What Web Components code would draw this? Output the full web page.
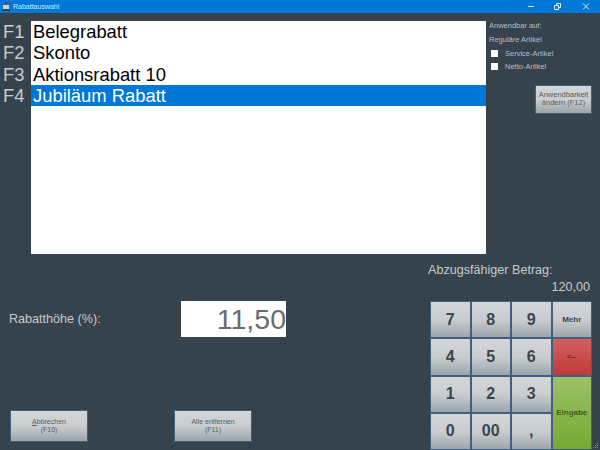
<!DOCTYPE html>
<html>
<head>
<meta charset="utf-8">
<title>Rabattauswahl</title>
<style>
html, body { margin: 0; height: 100%; overflow: hidden; background: #36434c; }
body { font-family: "Liberation Sans", Arial, sans-serif; }
</style>
</head>
<body>
<rabatt-window>
    <title-bar slot="title">Rabattauswahl</title-bar>
    <rabatt-list slot="list"></rabatt-list>
    <apply-panel slot="panel"></apply-panel>
    <amount-row slot="amount" label="Rabatthöhe (%):" value="11,50"></amount-row>
    <div slot="actions" style="display:contents">
        <pos-button style="width:78px;height:32px">
            <span><u>A</u>bbrechen<br>(F10)</span>
        </pos-button>
        <pos-button style="width:78px;height:32px;margin-left:86px">
            <span>Alle entfernen<br>(F11)</span>
        </pos-button>
    </div>
    <key-pad slot="keypad"></key-pad>
</rabatt-window>

<script>
class PosButton extends HTMLElement {
    constructor() {
        super()
        this.attachShadow({ mode: 'open' }).innerHTML = `<style>
            :host {
                display: flex;
                box-sizing: border-box;
                align-items: center;
                justify-content: center;
                text-align: center;
                border: 1px solid #3f6080;
                background: linear-gradient(#d3d7d9 0%, #c9cdd0 50%, #9ca5a9 100%);
                color: #565d63;
                font-size: 7px;
                line-height: 8px;
            }
            :host([key]) { font-size: 16px; font-weight: bold; color: #3c454c; }
            :host([label]) { font-size: 8px; font-weight: bold; color: #3c454c; }
            :host([danger]) { background: linear-gradient(#d45f5f, #c13a3c); color: #7e2a2a; }
            :host([ok]) { background: linear-gradient(#9cc268, #76a932); color: #3f5a20; }
        </style><slot></slot>`
    }
}

class TitleBar extends HTMLElement {
    constructor() {
        super()
        this.attachShadow({ mode: 'open' }).innerHTML = `<style>
            :host {
                display: flex;
                align-items: center;
                height: 13px;
                background: #0078d7;
                color: #d7e9f8;
                font-size: 7px;
            }
            .icon { margin: 0 3px 0 2px; }
            .name { flex: 1; }
            .controls { display: flex; margin-right: 1px; }
            .controls svg { width: 27px; height: 13px; display: block; }
        </style>
        <svg class="icon" width="8" height="9" viewBox="0 0 8 9">
            <rect x="1" y="3" width="6" height="4" fill="#c9d2da"/>
            <rect x="3" y="0" width="2" height="3" fill="#a83232"/>
            <rect x="0" y="7" width="8" height="2" fill="#39424b"/>
        </svg>
        <span class="name"><slot></slot></span>
        <span class="controls">
            <svg viewBox="0 0 27 13"><path d="M10 6.500h6" stroke="#e4eff9" fill="none"/></svg>
            <svg viewBox="0 0 27 13"><path d="M9.500 5.500h4v4h-4zM11.500 5.500v-2h4v4h-2" stroke="#e4eff9" fill="none"/></svg>
            <svg viewBox="0 0 27 13"><path d="M11 3.500l6 6M17 3.500l-6 6" stroke="#e4eff9" fill="none"/></svg>
        </span>`
    }
}

class RabattList extends HTMLElement {
    items = ["Belegrabatt", "Skonto", "Aktionsrabatt 10", "Jubiläum Rabatt"]
    selected = 3

    constructor() {
        super()
        this.shadow = this.attachShadow({ mode: 'open' })
    }

    connectedCallback() {
        const keys = this.items.map((_, i) => `<div class="key">F${i + 1}</div>`)
        const rows = this.items.map((item, i) =>
            `<div class="row${i === this.selected ? " selected" : ""}">${item}</div>`)
        this.shadow.innerHTML = `<style>
            :host { display: flex; font-size: 18.400px; line-height: 21.33px; }
            .keys { width: 31px; padding-left: 3px; box-sizing: border-box; color: #c7cbce; }
            .list { width: 455px; height: 233px; background: #fff; color: #000; }
            .row { padding-left: 2px; height: 21.33px; white-space: nowrap; }
            .selected { background: #0078d7; color: #fff; }
        </style>
        <div class="keys">${keys.join("")}</div>
        <div class="list">${rows.join("")}</div>`
    }
}

class ApplyPanel extends HTMLElement {
    constructor() {
        super()
        this.attachShadow({ mode: 'open' }).innerHTML = `<style>
            :host {
                display: flex;
                flex-direction: column;
                width: 111px;
                padding-left: 3px;
                box-sizing: border-box;
                color: #b8bdc0;
                font-size: 7.500px;
            }
            .line { height: 14px; line-height: 14px; }
            .check { display: flex; align-items: center; height: 13.300px; gap: 7px; margin-left: 2px; }
            .box { width: 7px; height: 7px; background: #fff; }
            pos-button { width: 57px; height: 29px; margin: 11px 0 0 46px; font-size: 7.500px; }
        </style>
        <div class="line" style="margin-top:-2px">Anwendbar auf:</div>
        <div class="line">Reguläre Artikel</div>
        <div class="check"><span class="box"></span>Service-Artikel</div>
        <div class="check"><span class="box"></span>Netto-Artikel</div>
        <pos-button>Anwendbarkeit<br>ändern (F12)</pos-button>`
    }
}

class AmountRow extends HTMLElement {
    connectedCallback() {
        const shadow = this.shadowRoot || this.attachShadow({ mode: 'open' })
        shadow.innerHTML = `<style>
            :host { display: flex; align-items: center; color: #c7cbce; font-size: 12.600px; }
            .label { width: 172px; padding-left: 9px; }
            .value {
                width: 105px;
                height: 36px;
                background: #fff;
                color: #6b6b6b;
                font-size: 28.500px;
                line-height: 36px;
                text-align: right;
            }
        </style>
        <div class="label">${this.getAttribute("label")}</div>
        <div class="value">${this.getAttribute("value")}</div>`
    }
}

class KeyPad extends HTMLElement {
    constructor() {
        super()
        this.attachShadow({ mode: 'open' }).innerHTML = `<style>
            :host {
                display: grid;
                grid-template-columns: repeat(4, 40.500px);
                grid-template-rows: repeat(4, 37.250px);
                width: 162px;
            }
            .ok { grid-column: 4; grid-row: 3 / span 2; }
        </style>
        <pos-button key>7</pos-button><pos-button key>8</pos-button><pos-button key>9</pos-button>
        <pos-button label>Mehr</pos-button>
        <pos-button key>4</pos-button><pos-button key>5</pos-button><pos-button key>6</pos-button>
        <pos-button label danger>&lt;--</pos-button>
        <pos-button key>1</pos-button><pos-button key>2</pos-button><pos-button key>3</pos-button>
        <pos-button label ok class="ok">Eingabe</pos-button>
        <pos-button key>0</pos-button><pos-button key>00</pos-button><pos-button key>,</pos-button>`
    }
}

class RabattWindow extends HTMLElement {
    constructor() {
        super()
        this.attachShadow({ mode: 'open' }).innerHTML = `<style>
            :host {
                display: flex;
                flex-direction: column;
                position: relative;
                width: 600px;
                height: 450px;
                background: #36434c;
                overflow: hidden;
            }
            .top { display: flex; padding-top: 8px; height: 233px; }
            .bottom { display: flex; flex: 1; }
            .left { display: flex; flex-direction: column; width: 430px; }
            .amount { margin-top: 47px; }
            .actions { display: flex; margin: 73px 0 0 10px; }
            .right { color: #c7cbce; font-size: 12.600px; }
            .deduct { margin: 8px 0 0 -2px; height: 16px; line-height: 16px; white-space: nowrap; }
            .sum { text-align: right; padding-right: 2px; height: 18px; line-height: 18px; margin-bottom: 5px; }
            .grip { position: absolute; right: 1px; bottom: 1px; }
        </style>
        <slot name="title"></slot>
        <div class="top"><slot name="list"></slot><slot name="panel"></slot></div>
        <div class="bottom">
            <div class="left">
                <div class="amount"><slot name="amount"></slot></div>
                <div class="actions"><slot name="actions"></slot></div>
            </div>
            <div class="right">
                <div class="deduct">Abzugsfähiger Betrag:</div>
                <div class="sum">120,00</div>
                <slot name="keypad"></slot>
            </div>
        </div>
        <svg class="grip" width="6" height="6" viewBox="0 0 6 6" fill="#8d979d">
            <rect x="4" y="0" width="1" height="1"/>
            <rect x="2" y="2" width="1" height="1"/><rect x="4" y="2" width="1" height="1"/>
            <rect x="0" y="4" width="1" height="1"/><rect x="2" y="4" width="1" height="1"/><rect x="4" y="4" width="1" height="1"/>
        </svg>`
    }
}

customElements.define("pos-button", PosButton)
customElements.define("title-bar", TitleBar)
customElements.define("rabatt-list", RabattList)
customElements.define("apply-panel", ApplyPanel)
customElements.define("amount-row", AmountRow)
customElements.define("key-pad", KeyPad)
customElements.define("rabatt-window", RabattWindow)
</script>
</body>
</html>
